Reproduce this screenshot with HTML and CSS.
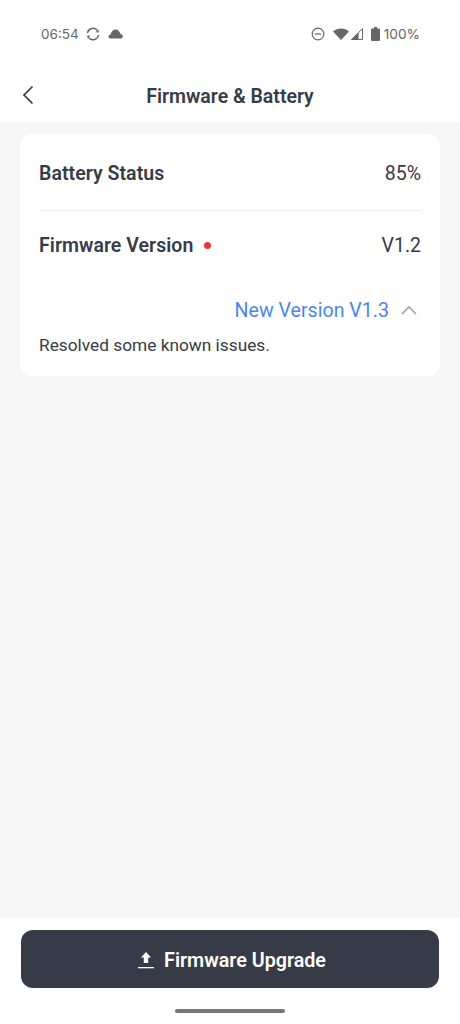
FILE: index.html
```html
<!DOCTYPE html>
<html lang="en">
<head>
    <meta charset="UTF-8">
    <meta name="viewport" content="width=device-width, initial-scale=1.0">
    <title>Firmware &amp; Battery</title>
    <link rel="stylesheet" href="styles.css">
</head>
<body>

    <div class="status-bar">
        <div class="status-left">
            <span class="clock">06:54</span>
            <svg class="sync-icon" width="14" height="14" viewBox="0 0 14 14" fill="none" stroke="#666" stroke-width="1.5">
                <path d="M11.300 3.200A5.600 5.600 0 0 0 1.500 6"/>
                <path d="M2.700 10.800A5.600 5.600 0 0 0 12.500 8"/>
                <path d="M12.800 5.500 9.500 5.200 12.500 2.500z" fill="#666" stroke="none"/>
                <path d="M1.200 8.500l3.300.3-3 2.700z" fill="#666" stroke="none"/>
            </svg>
            <svg class="cloud-icon" width="15" height="10" viewBox="0 0 15 10" fill="#666">
                <path d="M2.500 9.500C-.3 9.500-.3 5.800 2.500 5.500 3.200 2.500 5.200.5 7.500.5c2.400 0 4.300 2 4.900 4.500 3.100.3 3.100 4.500.1 4.500z"/>
            </svg>
        </div>
        <div class="status-right">
            <svg class="dnd-icon" width="14" height="14" viewBox="0 0 14 14" fill="none" stroke="#666" stroke-width="1.2">
                <circle cx="7" cy="7" r="5.800"/>
                <path d="M3.800 7h6.400"/>
            </svg>
            <svg class="wifi-icon" width="16" height="12" viewBox="0 0 16 12" fill="#666">
                <path d="M0 3.500C2 1.500 5 .5 8 .5s6 1 8 3L8 12z"/>
            </svg>
            <svg class="signal-icon" width="12" height="12" viewBox="0 0 12 12">
                <path d="M.6 11.500 11.500.6v10.900z" fill="#fff" stroke="#666" stroke-width="1"/>
                <path d="M0 12 7.500 4.500V12z" fill="#666"/>
            </svg>
            <svg class="battery-icon" width="9" height="14" viewBox="0 0 9 14" fill="#666">
                <path d="M3 0h3v1.500h2a1 1 0 0 1 1 1V13a1 1 0 0 1-1 1H1a1 1 0 0 1-1-1V2.500a1 1 0 0 1 1-1h2z"/>
            </svg>
            <span class="battery-text">100%</span>
        </div>
    </div>

    <div class="header">
        <svg class="back-icon" width="12" height="20" viewBox="0 0 12 20" fill="none" stroke="#373b47" stroke-width="1.700">
            <path d="M10.500 1.500 2 10l8.500 8.500"/>
        </svg>
        <h1>Firmware &amp; Battery</h1>
    </div>

    <div class="content">
        <div class="card">
            <div class="row row-battery">
                <span class="row-label">Battery Status</span>
                <span class="row-value">85%</span>
            </div>
            <div class="row row-firmware">
                <span class="row-label">Firmware Version <i class="red-dot"></i></span>
                <span class="row-value">V1.2</span>
            </div>
            <div class="new-version">
                <span>New Version V1.3</span>
                <svg width="16" height="10" viewBox="0 0 16 10" fill="none" stroke="#a3a5aa" stroke-width="1.700">
                    <path d="M1 9 8 2l7 7"/>
                </svg>
            </div>
            <p class="notes">Resolved some known issues.</p>
        </div>
    </div>

    <div class="footer">
        <button class="upgrade-btn" type="button">
            <svg width="16" height="17" viewBox="0 0 16 17" fill="#fff">
                <path d="M8 0 13 5.500H10.200V11H5.800V5.500H3z"/>
                <rect y="15" width="16" height="1.300"/>
            </svg>
            Firmware Upgrade
        </button>
        <div class="home-bar"></div>
    </div>

</body>
</html>
```

FILE: styles.css
```css
* {
    box-sizing: border-box;
}

body {
    margin: 0;
    width: 460px;
    height: 1024px;
    display: flex;
    flex-direction: column;
    font-family: Roboto, "Liberation Sans", sans-serif;
    background-color: #f7f7f7;
    color: #373b47;
}

/* Status bar */
.status-bar {
    height: 68px;
    padding: 0 40px 0 41px;
    display: flex;
    justify-content: space-between;
    align-items: center;
    background-color: white;
    font-family: Inter, sans-serif;
    font-size: 13.500px;
    color: #666;
}

.status-left,
.status-right {
    display: flex;
    align-items: center;
}

.sync-icon {
    margin-left: 7px;
}

.cloud-icon {
    margin-left: 8px;
}

.status-right .wifi-icon {
    margin-left: 8px;
}

.status-right .signal-icon {
    margin-left: 2px;
}

.status-right .battery-icon {
    margin-left: 8px;
}

.battery-text {
    margin-left: 4px;
    font-size: 13.700px;
}

/* Header */
.header {
    height: 54px;
    padding-top: 2px;
    display: flex;
    align-items: center;
    justify-content: center;
    position: relative;
    background-color: white;
}

.back-icon {
    position: absolute;
    left: 22px;
    top: 17px;
}

h1 {
    margin: 0;
    font-size: 19.500px;
    font-weight: 600;
}

/* Card */
.content {
    flex: 1;
    padding: 12px 20px;
}

.card {
    height: 242px;
    padding: 0 19px;
    background-color: white;
    border-radius: 12px;
}

.row {
    display: flex;
    justify-content: space-between;
    align-items: center;
}

.row-battery {
    height: 77px;
    padding-top: 2px;
    border-bottom: 1px solid #ececec;
}

.row-firmware {
    height: 68px;
}

.row-label {
    font-size: 19.500px;
    font-weight: 600;
    letter-spacing: 0.05px;
}

.row-value {
    font-size: 19.500px;
}

.red-dot {
    display: inline-block;
    width: 7px;
    height: 7px;
    margin-left: 6px;
    vertical-align: 3px;
    border-radius: 50%;
    background-color: #e8383d;
}

.new-version {
    margin-top: 17px;
    height: 28px;
    display: flex;
    justify-content: flex-end;
    align-items: center;
    gap: 12px;
    padding-right: 4px;
    font-size: 19.600px;
    color: #4a86f0;
}

.notes {
    margin: 9px 0 0;
    font-size: 17.300px;
    line-height: 24px;
}

/* Footer */
.footer {
    height: 106px;
    padding-top: 12px;
    background-color: white;
    display: flex;
    flex-direction: column;
    align-items: center;
}

.upgrade-btn {
    width: 418px;
    height: 58px;
    padding: 2px 0 0 4px;
    border: none;
    border-radius: 12px;
    background-color: #373b47;
    color: white;
    font-family: Roboto, sans-serif;
    font-size: 19.700px;
    font-weight: 600;
    display: flex;
    align-items: center;
    justify-content: center;
    gap: 10px;
}

.home-bar {
    width: 110px;
    height: 4px;
    margin-top: 21px;
    border-radius: 2px;
    background-color: #777;
}
```
